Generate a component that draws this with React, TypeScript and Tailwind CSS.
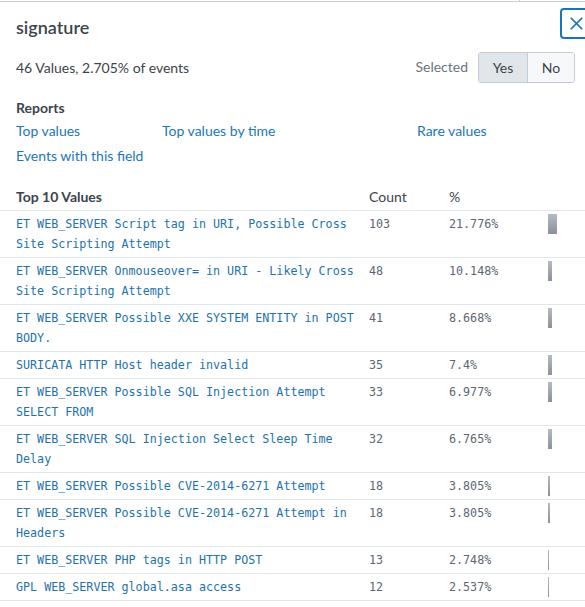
import { X } from "lucide-react";

type Row = {
  label: string;
  count: number;
  pct: string;
  bar: number;
};

const rows: Row[] = [
  { label: "ET WEB_SERVER Script tag in URI, Possible Cross Site Scripting Attempt", count: 103, pct: "21.776%", bar: 9 },
  { label: "ET WEB_SERVER Onmouseover= in URI - Likely Cross Site Scripting Attempt", count: 48, pct: "10.148%", bar: 4 },
  { label: "ET WEB_SERVER Possible XXE SYSTEM ENTITY in POST BODY.", count: 41, pct: "8.668%", bar: 4 },
  { label: "SURICATA HTTP Host header invalid", count: 35, pct: "7.4%", bar: 4 },
  { label: "ET WEB_SERVER Possible SQL Injection Attempt SELECT FROM", count: 33, pct: "6.977%", bar: 4 },
  { label: "ET WEB_SERVER SQL Injection Select Sleep Time Delay", count: 32, pct: "6.765%", bar: 4 },
  { label: "ET WEB_SERVER Possible CVE-2014-6271 Attempt", count: 18, pct: "3.805%", bar: 2 },
  { label: "ET WEB_SERVER Possible CVE-2014-6271 Attempt in Headers", count: 18, pct: "3.805%", bar: 2 },
  { label: "ET WEB_SERVER PHP tags in HTTP POST", count: 13, pct: "2.748%", bar: 1 },
  { label: "GPL WEB_SERVER global.asa access", count: 12, pct: "2.537%", bar: 1 },
];

const sans = "font-['Lato','Open_Sans',sans-serif]";
const mono = "font-['DejaVu_Sans_Mono','Liberation_Mono',monospace]";

const App = () => {
  return (
    <div className={`relative w-full min-h-[607px] overflow-hidden bg-white ${sans} text-[14px] text-[#3c444d]`}>
      {/* edge of the panel behind */}
      <div className="flex h-[2px] border-b border-[#c9ced4]">
        <div className="w-[520px] border-r border-[#c9ced4]" />
      </div>

      <button className="absolute top-[8px] left-[560px] flex h-[31px] w-[32px] items-center justify-center rounded-[4px] border-2 border-[#1a75b5] bg-white text-[#1a75b5]">
        <X size={21} strokeWidth={2} />
      </button>

      <div className="pl-4 pr-[10px]">
        <h2 className="mt-[13px] h-[24px] text-[18px] leading-[24px] font-semibold text-[#3c444d]">signature</h2>

        <div className="mt-[13px] flex h-[31px] items-center">
          <span className="flex-1">46 Values, 2.705% of events</span>
          <span className="mr-[10px] mb-[3px] text-[#6b7580]">Selected</span>
          <div className="flex h-[31px] overflow-hidden rounded-[3px] border border-[#c3cbd4]">
            <button className="w-[49px] border-r border-[#c3cbd4] bg-[#e1e6eb] text-[#3c444d]">Yes</button>
            <button className="w-[46px] bg-[#f7f8fa] text-[#3c444d]">No</button>
          </div>
        </div>

        <div className="mt-[15px] leading-[20px] font-bold">Reports</div>
        <div className="mt-[3px] grid grid-cols-[146px_255px_1fr] leading-[20px] text-[#1c77b8]">
          <a href="#">Top values</a>
          <a href="#">Top values by time</a>
          <a href="#">Rare values</a>
        </div>
        <div className="mt-[5px] leading-[20px] text-[#1c77b8]">
          <a href="#">Events with this field</a>
        </div>
      </div>

      <div className="mt-[21px] grid grid-cols-[353px_80px_99px_1fr] border-b border-[#e1e6eb] pb-[3px] pl-4 leading-[20px]">
        <div className="font-bold">Top 10 Values</div>
        <div>Count</div>
        <div>%</div>
        <div />
      </div>

      {rows.map((r) => (
        <div
          key={r.label}
          className={`grid grid-cols-[353px_80px_99px_1fr] border-b border-[#e1e6eb] py-[3px] pl-4 ${mono} text-[11.7px] leading-[20px]`}
        >
          <div className="pr-[10px] text-[#1e72ad]">{r.label}</div>
          <div className="text-[#5c6773]">{r.count}</div>
          <div className="text-[#5c6773]">{r.pct}</div>
          <div>
            <div className="h-[20px] bg-linear-to-b from-[#b5bbc3] to-[#8a919a]" style={{ width: r.bar }} />
          </div>
        </div>
      ))}
    </div>
  );
};

export default App;
